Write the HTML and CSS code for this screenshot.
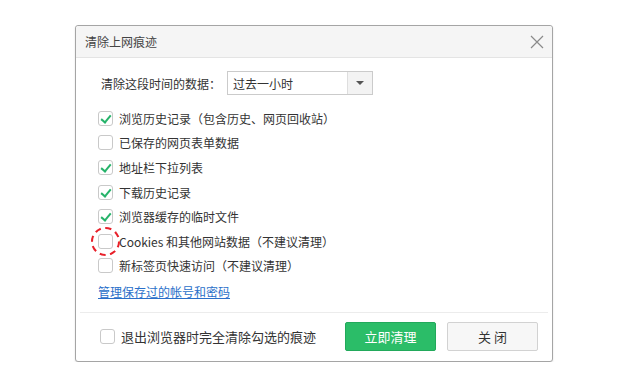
FILE: index.html
```html
<!DOCTYPE html>
<html lang="zh-CN">
<head>
  <meta charset="UTF-8" />
  <title>清除上网痕迹</title>
  <link rel="stylesheet" href="styles.css">
</head>
<body>

  <div class="dialog">
    <div class="titlebar">
      <span class="title">清除上网痕迹</span>
      <svg class="close" width="14" height="14" viewBox="0 0 14 14">
        <path d="M1 1L13 13M13 1L1 13" stroke="#8a8a8a" stroke-width="1.2" fill="none" />
      </svg>
    </div>

    <div class="content">
      <div class="range">
        <span class="range-label">清除这段时间的数据：</span>
        <div class="select">
          <span class="select-text">过去一小时</span>
          <span class="select-arrow"><i class="caret"></i></span>
        </div>
      </div>

      <ul class="options">
        <li><span class="box checked"></span>浏览历史记录（包含历史、网页回收站）</li>
        <li><span class="box"></span>已保存的网页表单数据</li>
        <li><span class="box checked"></span>地址栏下拉列表</li>
        <li><span class="box checked"></span>下载历史记录</li>
        <li><span class="box checked"></span>浏览器缓存的临时文件</li>
        <li><span class="box marked"></span>Cookies 和其他网站数据（不建议清理）</li>
        <li><span class="box"></span>新标签页快速访问（不建议清理）</li>
      </ul>

      <a href="#" class="manage">管理保存过的帐号和密码</a>
    </div>

    <div class="footer">
      <label class="exit"><span class="box"></span>退出浏览器时完全清除勾选的痕迹</label>
      <button class="btn btn-green">立即清理</button>
      <button class="btn btn-gray">关 闭</button>
    </div>
  </div>

</body>
</html>
```

FILE: styles.css
```css
body {
  margin: 0;
  background: #fff;
  font-family: "Microsoft YaHei", "Noto Sans CJK SC", sans-serif;
  color: #333;
}
.dialog {
  position: relative;
  width: 476px;
  height: 335px;
  margin: 25px 0 0 75px;
  border: 1px solid #a5a5a5;
  border-radius: 3px;
  background: #fff;
  box-shadow: 0 1px 2px rgba(0, 0, 0, 0.12);
  display: flex;
  flex-direction: column;
}
.titlebar {
  height: 31px;
  display: flex;
  align-items: center;
  justify-content: space-between;
  padding: 0 8px 0 9px;
  background: #f5f5f5;
  border-bottom: 1px solid #e4e4e4;
  border-radius: 3px 3px 0 0;
}
.title {
  font-size: 12px;
  color: #444;
}
.close {
  display: block;
}
.content {
  padding: 13px 0 0 22px;
}
.range {
  display: flex;
  align-items: center;
  padding-left: 3px;
}
.range-label {
  font-size: 12px;
  width: 126px;
}
.select {
  width: 144px;
  height: 22px;
  border: 1px solid #cbcbcb;
  display: flex;
  align-items: center;
}
.select-text {
  flex: 1;
  font-size: 12px;
  padding-left: 5px;
}
.select-arrow {
  width: 24px;
  height: 22px;
  background: #f3f3f3;
  border-left: 1px solid #dedede;
  display: flex;
  align-items: center;
  justify-content: center;
}
.caret {
  width: 0;
  height: 0;
  border-left: 4px solid transparent;
  border-right: 4px solid transparent;
  border-top: 4px solid #555;
}
.options {
  list-style: none;
  margin: 11px 0 0;
  padding: 0;
}
.options li {
  height: 24.6px;
  display: flex;
  align-items: center;
  font-size: 12px;
}
.box {
  position: relative;
  width: 13px;
  height: 13px;
  border: 1px solid #c9c9c9;
  border-radius: 3px;
  background: #fff;
  margin-right: 6px;
  flex: none;
}
.box.checked::after {
  content: "";
  position: absolute;
  left: 4px;
  top: 1px;
  width: 4px;
  height: 8px;
  border-right: 2px solid #26b36a;
  border-bottom: 2px solid #26b36a;
  transform: rotate(40deg);
}
.box.marked::before {
  content: "";
  position: absolute;
  left: -8px;
  top: -8px;
  width: 25px;
  height: 25px;
  border: 2px dashed #e8202a;
  border-radius: 50%;
}
.manage {
  display: inline-block;
  margin-top: 5px;
  font-size: 12px;
  color: #2a6fc9;
  text-decoration: underline;
}
.footer {
  margin: 10px 4px 0;
  border-top: 1px solid #ececec;
  display: flex;
  align-items: center;
  padding: 9px 10px 0 20px;
}
.exit {
  flex: 1;
  display: flex;
  align-items: center;
  font-size: 13px;
}
.btn {
  width: 91px;
  height: 29px;
  font-family: inherit;
  font-size: 13px;
  border-radius: 2px;
  cursor: pointer;
}
.btn-green {
  background: #2bbd68;
  border: 1px solid #22a95b;
  color: #fff;
  margin-right: 11px;
}
.btn-gray {
  background: #f7f7f7;
  border: 1px solid #d2d2d2;
  color: #333;
}
```
